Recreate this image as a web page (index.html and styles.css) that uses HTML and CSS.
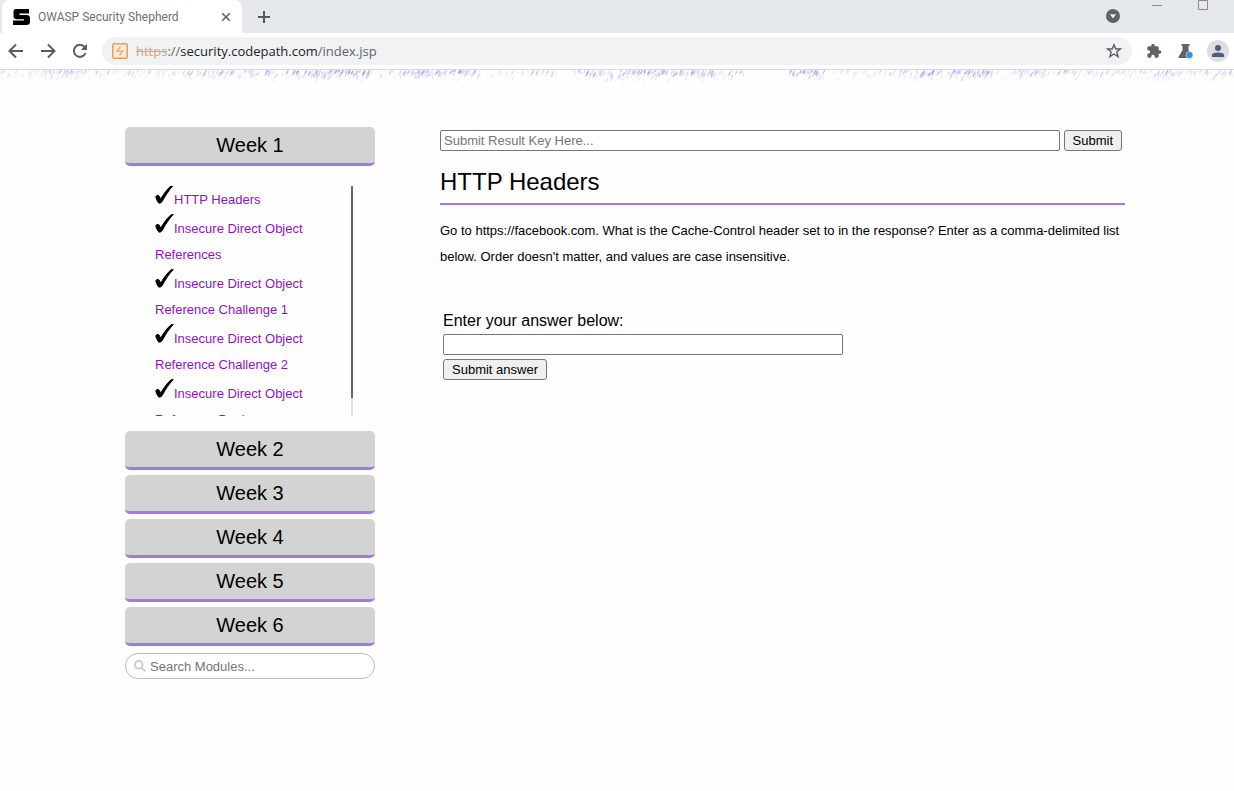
FILE: index.html
```html
<!DOCTYPE html>
<html lang="en">
<head>
<meta charset="utf-8">
<title>OWASP Security Shepherd</title>
<link rel="stylesheet" href="styles.css">
</head>
<body>
<svg class="defs" aria-hidden="true">
  <symbol id="tick" viewBox="0 0 19 19"><path stroke="#000" stroke-width=".9" stroke-linejoin="round" d="M.8 12.2C.7 10.500 3.400 9.600 4.300 11.200L5.600 14.200C9 8.500 12.500 3.600 15.800 1.100C16.600.5 17.500.5 18.300.6C14 4.800 10.500 10.500 7.200 16.500C6.200 18.300 3.700 18.800 3 17.300C2 15.300 1.500 14.500.8 12.200Z"/></symbol>
</svg>
<header class="browser">
  <div class="tabstrip">
    <div class="tab">
      <svg class="favicon" viewBox="0 0 17 16" aria-hidden="true"><path d="M3 0H16V4.500H6.500V6H13.500Q17 6 17 9V12.500Q17 16 13.500 16H0V11.500H11V10.200H4Q.5 10.200.5 7V3Q.5 0 3 0Z"/></svg>
      <span class="tab-title">OWASP Security Shepherd</span>
      <button class="tab-close" aria-label="Close tab"><svg viewBox="0 0 10 10"><path d="M1.200 1.200L8.800 8.800M8.800 1.200L1.200 8.800"/></svg></button>
    </div>
    <button class="new-tab" aria-label="New tab"><svg viewBox="0 0 12 12"><path d="M6 0V12M0 6H12"/></svg></button>
    <div class="window-controls">
      <button class="tab-search" aria-label="Search tabs"><svg viewBox="0 0 14 14"><circle cx="7" cy="7" r="7" fill="#5f6368"/><path d="M3.800 5.300H10.200L7 9.500Z" fill="#e8eaed"/></svg></button>
      <button class="minimize" aria-label="Minimize"><svg viewBox="0 0 10 10"><path d="M0 5.500H10"/></svg></button>
      <button class="maximize" aria-label="Maximize"><svg viewBox="0 0 10 10"><path d="M.5.5H9.500V9.500H.5Z"/></svg></button>
    </div>
  </div>
  <div class="toolbar">
    <button class="tool" aria-label="Back"><svg viewBox="0 0 16 16"><path d="M15 8H2M8 1.500L1.500 8L8 14.500"/></svg></button>
    <button class="tool" aria-label="Forward"><svg viewBox="0 0 16 16"><path d="M1 8H14M8 1.500L14.500 8L8 14.500"/></svg></button>
    <button class="tool" aria-label="Reload"><svg viewBox="0 0 16 16"><path d="M13.500 10A6 6 0 1 1 12.500 4"/><path class="solid" d="M15 .8V7H8.800Z"/></svg></button>
    <div class="address">
      <svg class="site" viewBox="0 0 16 16" aria-hidden="true"><rect x=".8" y=".8" width="14.400" height="14.400" rx="1.500"/><path d="M8.500 3.500L5 8H10.800L7.500 12.500"/></svg>
      <span class="url"><s>https</s><span class="dim">://</span>security.codepath.com<span class="dim">/index.jsp</span></span>
      <button class="star" aria-label="Bookmark"><svg viewBox="0 0 24 24"><path d="M12 2.500L14.700 9H21.700L16.200 13.500L18.200 20.500L12 16.500L5.800 20.500L7.800 13.500L2.300 9H9.300Z"/></svg></button>
    </div>
    <button class="ext" aria-label="Extensions"><svg viewBox="0 0 24 24"><path d="M20.500 11H19V7a2 2 0 0 0-2-2h-4V3.500a2.500 2.500 0 0 0-5 0V5H4a2 2 0 0 0-2 2v3.800h1.500a2.700 2.700 0 0 1 0 5.400H2V20a2 2 0 0 0 2 2h3.800v-1.500a2.700 2.700 0 0 1 5.400 0V22H17a2 2 0 0 0 2-2v-4h1.500a2.500 2.500 0 0 0 0-5z"/></svg></button>
    <button class="ext" aria-label="Labs"><svg viewBox="0 0 16 16"><path d="M3.500 1H11.500V3H10.500V7L14 14Q14 15 13 15H1Q0 15 .5 14L4.500 7V3H3.500Z"/><circle cx="11.500" cy="12" r="3.500" fill="#3b8ede" stroke="#fff" stroke-width=".5"/></svg></button>
    <button class="avatar" aria-label="Profile"><svg viewBox="0 0 12 12"><circle cx="6" cy="3" r="3"/><path d="M0 12V10Q0 7.500 6 7.500T12 10V12Z"/></svg></button>
  </div>
</header>
<svg class="grass" aria-hidden="true"></svg>
<main class="page">
  <nav class="sidebar">
    <button class="week">Week 1</button>
    <div class="modules">
      <ul class="module-list">
        <li><svg class="tick"><use href="#tick"/></svg><a href="#headers">HTTP Headers</a></li>
        <li><svg class="tick"><use href="#tick"/></svg><a href="#idor">Insecure Direct Object References</a></li>
        <li><svg class="tick"><use href="#tick"/></svg><a href="#idor1">Insecure Direct Object Reference Challenge 1</a></li>
        <li><svg class="tick"><use href="#tick"/></svg><a href="#idor2">Insecure Direct Object Reference Challenge 2</a></li>
        <li><svg class="tick"><use href="#tick"/></svg><a href="#bank">Insecure Direct Object Reference Bank</a></li>
      </ul>
      <div class="track"><div class="thumb"></div></div>
    </div>
    <div class="weeks">
      <button class="week">Week 2</button>
      <button class="week">Week 3</button>
      <button class="week">Week 4</button>
      <button class="week">Week 5</button>
      <button class="week">Week 6</button>
    </div>
    <label class="search">
      <svg viewBox="0 0 12 12" aria-hidden="true"><circle cx="4.800" cy="4.800" r="3.800"/><path d="M7.600 7.600L11.200 11.200"/></svg>
      <input type="text" placeholder="Search Modules..." aria-label="Search Modules">
    </label>
  </nav>
  <section class="content">
    <form class="key-form">
      <input class="field" type="text" placeholder="Submit Result Key Here..." aria-label="Result key">
      <button class="btn" type="button">Submit</button>
    </form>
    <h2>HTTP Headers</h2>
    <p>Go to https://facebook.com. What is the Cache-Control header set to in the response? Enter as a comma-delimited list below. Order doesn't matter, and values are case insensitive.</p>
    <form class="answer-form">
      <label for="answer">Enter your answer below:</label>
      <input class="field" id="answer" type="text">
      <button class="btn" type="button">Submit answer</button>
    </form>
  </section>
</main>
<script src="grass.js"></script>
</body>
</html>
```
FILE: styles.css
```css
* { box-sizing: border-box; }
body { margin: 0; background: #fefefe; color: #000; font-family: "Liberation Sans", Arial, sans-serif; }
button { border: 0; padding: 0; background: none; color: inherit; font-family: inherit; }
svg { display: block; }
.defs { position: absolute; width: 0; height: 0; }

.browser { font-family: "Open Sans", "Noto Sans", sans-serif; border-bottom: 1px solid #d8d8dc; background: #fff; }
.tabstrip { display: flex; height: 33px; background: #e5e8ed; padding-left: 2px; }
.tab { display: flex; align-items: center; width: 240px; background: #fff; border-radius: 8px 8px 0 0; padding: 0 11px; }
.favicon { width: 17px; height: 16px; margin-right: 8px; }
.tab-title { flex: 1; font-family: Roboto, sans-serif; font-size: 12px; color: #6b7076; white-space: nowrap; }
.tab-close svg { width: 10px; height: 10px; stroke: #5f6368; stroke-width: 1.6; }
.new-tab { padding: 0 16px; }
.new-tab svg { width: 12px; height: 12px; stroke: #54585d; stroke-width: 2; }
.window-controls { display: flex; align-items: flex-start; margin-left: auto; padding-right: 26px; }
.window-controls svg { fill: none; stroke: #8a8790; }
.tab-search { margin: 9px 32px 0 0; }
.tab-search svg { width: 14px; height: 14px; stroke: none; }
.minimize { margin-right: 36px; }
.minimize svg, .maximize svg { width: 10px; height: 10px; }

.toolbar { display: flex; align-items: center; height: 36px; padding: 0 5px 0 8px; }
.tool { width: 16px; margin-right: 16px; }
.tool svg { width: 16px; height: 16px; fill: none; stroke: #5a5c63; stroke-width: 2; }
.tool .solid { fill: #5a5c63; stroke: none; }
.address { display: flex; align-items: center; flex: 1; height: 28px; margin: 0 14px 0 -2px; padding: 0 10px; background: #f1f2f4; border-radius: 14px; }
.site { width: 16px; height: 16px; margin-right: 8px; fill: #fdebd8; stroke: #ef9c4f; stroke-width: 1.5; }
.site path { fill: none; stroke-width: 1.2; }
.url { flex: 1; font-size: 13px; color: #202124; white-space: nowrap; }
.url s { color: #e8a365; }
.dim { color: #60646a; }
.star svg { width: 16px; height: 16px; fill: none; stroke: #5a5c63; stroke-width: 2; }
.ext { margin-right: 16px; }
.ext svg { width: 16px; height: 16px; fill: #5f6368; }
.avatar { display: grid; place-items: center; width: 22px; height: 22px; border-radius: 50%; background: #dddde2; margin-left: -3px; }
.avatar svg { width: 12px; height: 12px; fill: #515b7c; }

.grass { width: 100%; height: 17px; stroke-linecap: round; }

.page { display: grid; grid-template-columns: 250px 1fr; gap: 65px; padding: 40px 109px 40px 125px; }
.week { display: block; width: 100%; height: 39px; background: #d3d3d3; border-bottom: 3px solid #a874ed; border-radius: 5px; font-size: 20px; }
.weeks { display: grid; gap: 5px; }
.modules { display: flex; justify-content: space-between; height: 230px; margin: 20px 22px 15px 30px; overflow: hidden; }
.module-list { list-style: none; margin: 0; padding: 0; width: 180px; font-size: 13px; line-height: 26px; }
.module-list li { padding: 1px 0 2px; }
.module-list a { color: #9311c4; text-decoration: none; }
.tick { display: inline-block; width: 19px; height: 19px; margin-top: -6px; vertical-align: 0; }
.track { width: 2px; background: #e2e1e8; }
.thumb { height: 92%; background: #666; }
.search { display: flex; align-items: center; gap: 4px; height: 26px; margin-top: 7px; padding: 0 8px; border: 1px solid #b9bcc0; border-radius: 13px; background: #fff; }
.search svg { width: 12px; height: 12px; fill: none; stroke: #c9ced3; stroke-width: 2; }
.search input { flex: 1; min-width: 0; border: 0; padding: 0; background: none; font-family: inherit; font-size: 13px; }
::placeholder { color: #757575; }

.content { padding-top: 3px; }
.field { height: 21px; padding: 0 3px; border: 1px solid #767676; border-radius: 2px; background: #fff; font-family: inherit; font-size: 13px; }
.btn { height: 21px; padding: 0 8px; border: 1px solid #767676; border-radius: 3px; background: #efefef; font-size: 13px; }
.key-form { display: flex; gap: 4px; padding-right: 3px; }
.key-form .field { flex: 1; }
h2 { margin: 15px 0 0; padding-bottom: 5px; border-bottom: 2px solid #a874ed; font-size: 24px; font-weight: 400; line-height: 32px; }
p { margin: 13px 0 0; font-size: 13px; line-height: 26px; }
.answer-form { display: grid; justify-items: start; gap: 4px; padding: 42px 3px 0; font-size: 16px; line-height: 18px; }
.answer-form .field { width: 400px; }
```
FILE: grass.js
```js
// Fringe of short slanted strokes; each band is [start, end, density, strength].
const bands = [
  [0, 50, 0.8, 0.22], [50, 75, 1.2, 0.35], [75, 190, 0.8, 0.22],
  [190, 235, 1.1, 0.35], [235, 290, 0.9, 0.35], [290, 370, 1.2, 0.55], [370, 400, 0.6, 0.2],
  [400, 480, 1.3, 0.45], [480, 530, 0.4, 0.2], [530, 560, 0.8, 0.3],
  [575, 665, 1.2, 0.4], [665, 745, 1.0, 0.45], [790, 825, 1.3, 0.5],
  [825, 870, 0.5, 0.2], [870, 915, 0.7, 0.3], [915, 992, 1.2, 0.5],
  [992, 1020, 0.7, 0.18], [1020, 1040, 1.2, 0.4], [1040, 1155, 0.9, 0.24],
  [1155, 1175, 1.2, 0.4], [1175, 1234, 0.9, 0.24]
];
let seed = 41;
const rand = () => (seed = (seed * 16807) % 2147483647) / 2147483647;
let out = "";
for (const [a, b, density, strength] of bands) {
  for (let i = 0; i < (b - a) * density; i++) {
    const x = a + rand() * (b - a);
    const y = rand() * rand() * 11;
    const len = 1 + rand() * 3;
    const alpha = strength * (1 - y / 13) * (0.25 + rand() * 0.75);
    const color = rand() > 0.7 ? "#7a3fe0" : "#8f86de";
    out += `<path d="M${x.toFixed(1)} ${y.toFixed(1)}l${(-len / 2).toFixed(1)} ${len.toFixed(1)}" stroke="${color}" stroke-width="1.2" opacity="${alpha.toFixed(2)}"/>`;
  }
}
document.querySelector(".grass").innerHTML = out;
```
